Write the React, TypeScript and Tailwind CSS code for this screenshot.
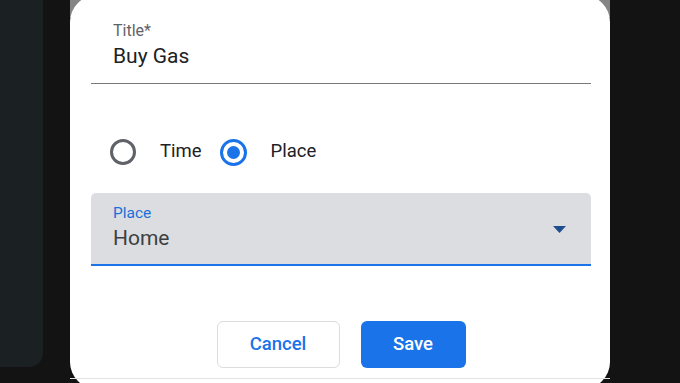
export default function App() {
  return (
    <div
      className="flex h-[383px] w-[680px] items-start overflow-hidden bg-[#131314]"
      style={{ fontFamily: 'Roboto, "Noto Sans", sans-serif' }}
    >
      {/* side panel peeking out on the left */}
      <div className="h-[367px] w-[43px] shrink-0 rounded-br-[14px] bg-[#1b2023]" />

      <div className="relative ml-[27px] mt-[-5px] w-[540px] shrink-0">
        <div className="absolute left-0 right-0 top-0 h-[22px] bg-[#858585]" />
        <div className="relative flex h-[394px] flex-col rounded-[27px] bg-white">
          <div className="flex flex-col pl-[21px] pr-[19px] pt-[26px]">
            {/* title field */}
            <div className="border-b border-[#777a7d] pb-[13px] pl-[22px]">
              <div className="text-[16px] leading-[20px] text-[#5f6368]">Title*</div>
              <div className="mt-[1px] text-[21px] leading-[28px] text-[#202124]">Buy Gas</div>
            </div>

            {/* reminder type */}
            <div className="mt-[54px] flex h-[28px] items-center pl-[19px] text-[18.5px] text-[#202124]">
              <span className="h-[26px] w-[26px] rounded-full border-[3px] border-[#5f6368]" />
              <span className="ml-[24px]">Time</span>
              <span className="ml-[18px] flex h-[27px] w-[27px] items-center justify-center rounded-full border-[3px] border-[#1a73e8]">
                <span className="h-[13px] w-[13px] rounded-full bg-[#1a73e8]" />
              </span>
              <span className="ml-[24px]">Place</span>
            </div>

            {/* place select */}
            <div className="mt-[27px] flex h-[73px] items-center rounded-t-[5px] border-b-2 border-[#1a73e8] bg-[#dcdde0] pl-[22px] pr-[25px]">
              <div className="flex-1 self-start pt-[10px]">
                <div className="text-[15.5px] leading-[20px] text-[#1a6fd8]">Place</div>
                <div className="mt-[1px] text-[21px] leading-[28px] text-[#3c4043]">Home</div>
              </div>
              <svg width="13" height="7" viewBox="0 0 13 7" className="mt-[2px]">
                <polygon points="0,0 13,0 6.5,7" fill="#1f4d8f" />
              </svg>
            </div>

            {/* actions */}
            <div className="mt-[55px] flex justify-center gap-[21px]">
              <button className="h-[47px] w-[123px] rounded-[6px] border border-[#dadce0] bg-white text-[18.5px] font-medium text-[#1a73e8]">
                Cancel
              </button>
              <button className="h-[47px] w-[105px] rounded-[6px] bg-[#1a73e8] text-[18.5px] font-medium text-white">
                Save
              </button>
            </div>
          </div>
          <div className="mt-[10px] flex-1 border-t border-[#e3e3e3]" />
        </div>
      </div>
    </div>
  );
}
